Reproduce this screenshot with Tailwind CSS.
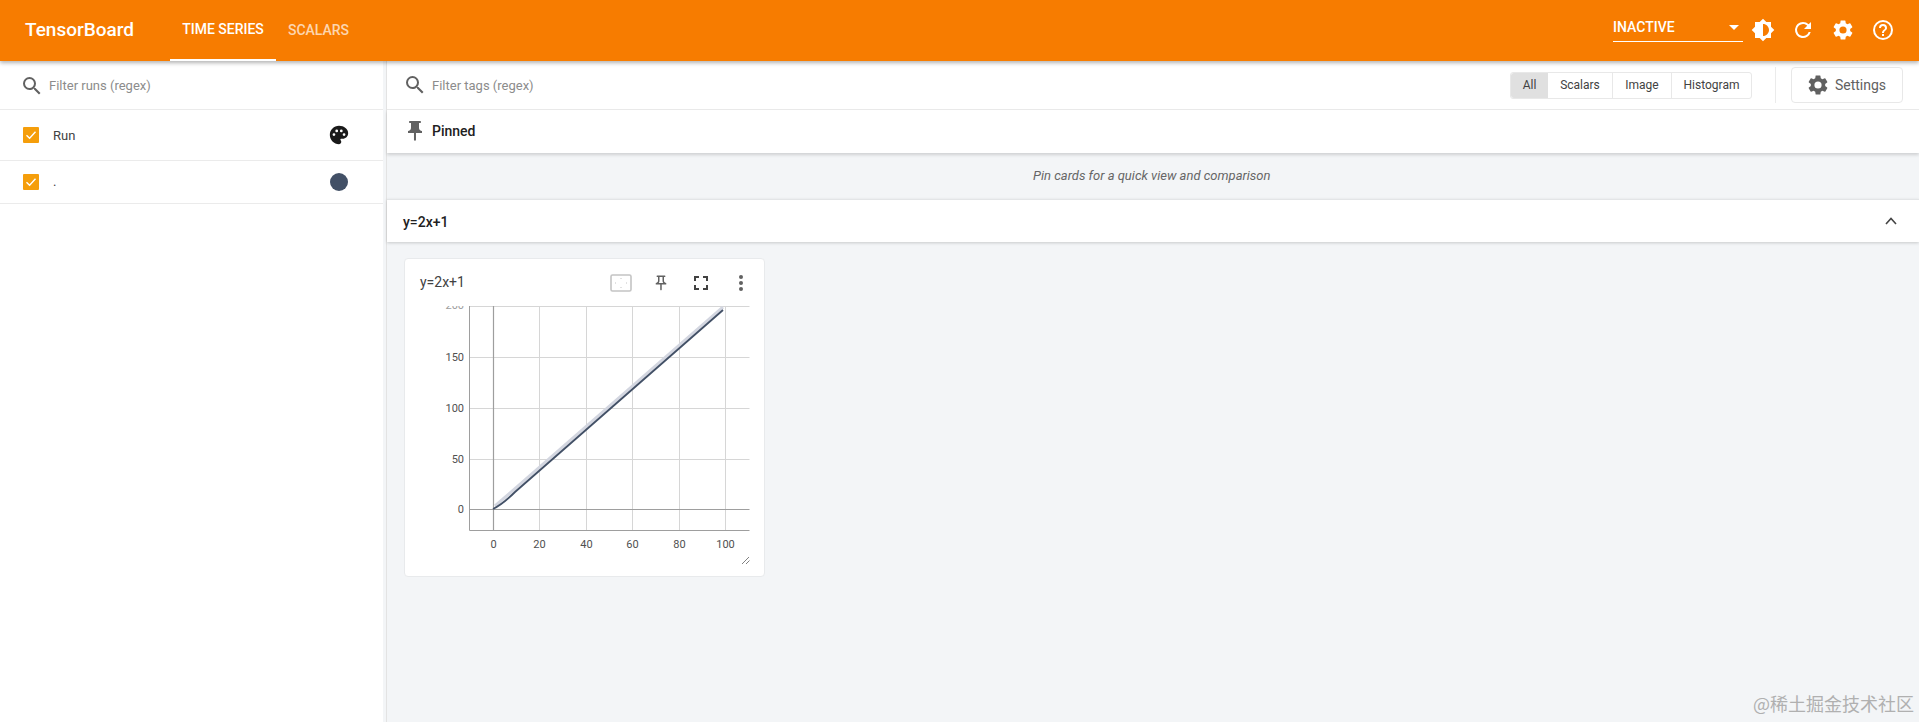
<!DOCTYPE html>
<html lang="en">
<head>
    <meta charset="UTF-8">
    <title>TensorBoard</title>
    <script src="https://cdn.jsdelivr.net/npm/@tailwindcss/browser@4"></script>
</head>
<body class="h-[722px] overflow-hidden bg-[#f3f5f7] font-['Roboto',sans-serif] text-[#212121] relative">

    <!-- top bar -->
    <header class="relative z-10 h-[61px] bg-[#f77c00] text-white flex items-stretch shadow-[0_2px_4px_rgba(0,0,0,0.3)]">
        <div class="w-[170px] pl-[25px] flex items-center text-[19px] font-medium">TensorBoard</div>
        <div class="w-[106px] border-b-2 border-white flex items-center justify-center text-[14px] font-medium">TIME SERIES</div>
        <div class="w-[85px] flex items-center justify-center text-[14px] font-medium text-white/70">SCALARS</div>
        <div class="ml-auto flex items-start pr-[24px]">
            <div class="w-[130px] h-[42px] pt-[18px] border-b border-white flex items-start justify-between text-[14px] font-medium">
                <span class="leading-[18px]">INACTIVE</span>
                <span class="w-0 h-0 mr-[4px] mt-[7px] border-x-[5px] border-x-transparent border-t-[5px] border-t-white"></span>
            </div>
            <svg class="w-[24px] h-[24px] ml-[8px] mt-[18px]" viewBox="0 0 24 24" fill="#fff"><path d="M20 8.69V4h-4.69L12 .69 8.69 4H4v4.69L.69 12 4 15.31V20h4.69L12 23.31 15.31 20H20v-4.69L23.31 12 20 8.69zM12 18V6c3.31 0 6 2.69 6 6s-2.69 6-6 6z"/></svg>
            <svg class="w-[24px] h-[24px] ml-[16px] mt-[18px]" viewBox="0 0 24 24" fill="#fff"><path d="M17.65 6.35A7.96 7.96 0 0 0 12 4a8 8 0 1 0 7.73 10h-2.08A6 6 0 1 1 12 6c1.66 0 3.14.69 4.22 1.78L13 11h7V4l-2.35 2.35z"/></svg>
            <svg class="w-[24px] h-[24px] ml-[16px] mt-[18px]" viewBox="0 0 24 24" fill="#fff"><path d="M19.14 12.94c.04-.3.06-.61.06-.94 0-.32-.02-.64-.07-.94l2.03-1.58a.49.49 0 0 0 .12-.61l-1.92-3.32a.49.49 0 0 0-.59-.22l-2.39.96c-.5-.38-1.03-.7-1.62-.94l-.36-2.54a.48.48 0 0 0-.48-.41h-3.84c-.24 0-.43.17-.47.41l-.36 2.54c-.59.24-1.13.57-1.62.94l-2.39-.96a.48.48 0 0 0-.59.22L2.74 8.87c-.12.21-.08.47.12.61l2.03 1.58c-.05.3-.09.63-.09.94s.02.64.07.94l-2.03 1.58a.49.49 0 0 0-.12.61l1.92 3.32c.12.22.37.29.59.22l2.39-.96c.5.38 1.03.7 1.62.94l.36 2.54c.05.24.24.41.48.41h3.84c.24 0 .44-.17.47-.41l.36-2.54c.59-.24 1.13-.56 1.62-.94l2.39.96c.22.08.47 0 .59-.22l1.92-3.32a.46.46 0 0 0-.12-.61l-2.01-1.58zM12 15.6A3.61 3.61 0 0 1 8.4 12 3.61 3.61 0 0 1 12 8.4a3.61 3.61 0 0 1 3.6 3.6 3.61 3.61 0 0 1-3.6 3.6z"/></svg>
            <svg class="w-[24px] h-[24px] ml-[16px] mt-[18px]" viewBox="0 0 24 24" fill="#fff"><path d="M11 18h2v-2h-2v2zm1-16a10 10 0 1 0 0 20 10 10 0 0 0 0-20zm0 18a8 8 0 1 1 0-16 8 8 0 0 1 0 16zm0-14a4 4 0 0 0-4 4h2c0-1.1.9-2 2-2s2 .9 2 2c0 2-3 1.75-3 5h2c0-2.25 3-2.5 3-5a4 4 0 0 0-4-4z"/></svg>
        </div>
    </header>

    <div class="flex h-[661px]">
        <!-- runs sidebar -->
        <aside class="w-[383px] shrink-0 bg-white text-[13px]">
            <div class="h-[49px] pl-[20px] pt-[1px] flex items-center border-b border-[#ebebeb]">
                <svg class="w-[24px] h-[24px]" viewBox="0 0 24 24" fill="#616161"><path d="M15.5 14h-.79l-.28-.27A6.47 6.47 0 0 0 16 9.5 6.5 6.5 0 1 0 9.5 16c1.61 0 3.09-.59 4.23-1.57l.27.28v.79l5 4.99L20.49 19l-4.99-5zm-6 0C7.01 14 5 11.99 5 9.5S7.01 5 9.5 5 14 7.01 14 9.5 11.99 14 9.5 14z"/></svg>
                <span class="ml-[5px] text-[#8c8c8c]">Filter runs (regex)</span>
            </div>
            <div class="h-[51px] pl-[23px] pr-[33px] flex items-center border-b border-[#ebebeb]">
                <span class="w-[16px] h-[16px] bg-[#f59e0b] rounded-[1px] flex items-center justify-center">
                    <svg class="w-[12px] h-[12px]" viewBox="0 0 12 12" fill="none" stroke="#fff" stroke-width="1.4"><path d="M1.5 6.2 4.6 9.2 10.5 2.8"/></svg>
                </span>
                <span class="ml-[14px] pt-[1px] text-[#424242]">Run</span>
                <svg class="w-[22px] h-[22px] ml-auto" viewBox="0 0 24 24" fill="#1a1a1a"><path d="M12 2C6.49 2 2 6.49 2 12s4.49 10 10 10a2.5 2.5 0 0 0 1.84-4.19c-.29-.3-.34-.66-.34-.81 0-.55.45-1 1-1H16c3.31 0 6-2.69 6-6 0-4.41-4.49-8-10-8zM6.5 13a1.5 1.5 0 1 1 0-3 1.5 1.5 0 0 1 0 3zm3-4a1.5 1.5 0 1 1 0-3 1.5 1.5 0 0 1 0 3zm5 0a1.5 1.5 0 1 1 0-3 1.5 1.5 0 0 1 0 3zm3 4a1.5 1.5 0 1 1 0-3 1.5 1.5 0 0 1 0 3z"/></svg>
            </div>
            <div class="h-[43px] pl-[23px] pr-[35px] flex items-center border-b border-[#ebebeb]">
                <span class="w-[16px] h-[16px] bg-[#f59e0b] rounded-[1px] flex items-center justify-center">
                    <svg class="w-[12px] h-[12px]" viewBox="0 0 12 12" fill="none" stroke="#fff" stroke-width="1.4"><path d="M1.5 6.2 4.6 9.2 10.5 2.8"/></svg>
                </span>
                <span class="ml-[14px] text-[#424242]">.</span>
                <span class="ml-auto w-[18px] h-[18px] rounded-full bg-[#425066]"></span>
            </div>
        </aside>

        <!-- main column -->
        <main class="flex-1 ml-[3px] border-l border-[#e3e3e3] min-w-0">
            <div class="h-[49px] pl-[16px] bg-white border-b border-[#ebebeb] flex items-center text-[13px]">
                <svg class="w-[24px] h-[24px]" viewBox="0 0 24 24" fill="#616161"><path d="M15.5 14h-.79l-.28-.27A6.47 6.47 0 0 0 16 9.5 6.5 6.5 0 1 0 9.5 16c1.61 0 3.09-.59 4.23-1.57l.27.28v.79l5 4.99L20.49 19l-4.99-5zm-6 0C7.01 14 5 11.99 5 9.5S7.01 5 9.5 5 14 7.01 14 9.5 11.99 14 9.5 14z"/></svg>
                <span class="ml-[5px] pt-[1px] text-[#8c8c8c]">Filter tags (regex)</span>
                <div class="ml-auto flex h-[27px] border border-[#e8e8e8] rounded-[3px] text-[12px] text-[#424242]">
                    <span class="w-[37px] bg-[#e0e0e0] flex items-center justify-center rounded-l-[3px]">All</span>
                    <span class="w-[65px] border-r border-[#e8e8e8] flex items-center justify-center">Scalars</span>
                    <span class="w-[59px] border-r border-[#e8e8e8] flex items-center justify-center">Image</span>
                    <span class="w-[79px] flex items-center justify-center">Histogram</span>
                </div>
                <div class="w-px h-[36px] bg-[#ebebeb] ml-[23px]"></div>
                <div class="w-[112px] h-[36px] ml-[15px] mr-[16px] border border-[#e8e8e8] rounded-[4px] flex items-center justify-center text-[14px] text-[#616161]">
                    <svg class="w-[24px] h-[24px] mr-[5px] ml-[-2px]" viewBox="0 0 24 24" fill="#616161"><path d="M19.14 12.94c.04-.3.06-.61.06-.94 0-.32-.02-.64-.07-.94l2.03-1.58a.49.49 0 0 0 .12-.61l-1.92-3.32a.49.49 0 0 0-.59-.22l-2.39.96c-.5-.38-1.03-.7-1.62-.94l-.36-2.54a.48.48 0 0 0-.48-.41h-3.84c-.24 0-.43.17-.47.41l-.36 2.54c-.59.24-1.13.57-1.62.94l-2.39-.96a.48.48 0 0 0-.59.22L2.74 8.87c-.12.21-.08.47.12.61l2.03 1.58c-.05.3-.09.63-.09.94s.02.64.07.94l-2.03 1.58a.49.49 0 0 0-.12.61l1.92 3.32c.12.22.37.29.59.22l2.39-.96c.5.38 1.03.7 1.62.94l.36 2.54c.05.24.24.41.48.41h3.84c.24 0 .44-.17.47-.41l.36-2.54c.59-.24 1.13-.56 1.62-.94l2.39.96c.22.08.47 0 .59-.22l1.92-3.32a.46.46 0 0 0-.12-.61l-2.01-1.58zM12 15.6A3.61 3.61 0 0 1 8.4 12 3.61 3.61 0 0 1 12 8.4a3.61 3.61 0 0 1 3.6 3.6 3.61 3.61 0 0 1-3.6 3.6z"/></svg>
                    Settings
                </div>
            </div>
            <div class="relative h-[43px] pl-[16px] bg-white flex items-center text-[14px] font-medium shadow-[0_2px_3px_rgba(0,0,0,0.15)]">
                <svg class="w-[24px] h-[24px] mt-[-1px]" viewBox="0 0 24 24" fill="#616161"><path d="M16 9V4h1c.55 0 1-.45 1-1s-.45-1-1-1H7c-.55 0-1 .45-1 1s.45 1 1 1h1v5c0 1.66-1.34 3-3 3v2h5.97v7l1 1 1-1v-7H19v-2c-1.66 0-3-1.34-3-3z"/></svg>
                <span class="ml-[5px]">Pinned</span>
            </div>
            <div class="h-[46px] pl-[646px] flex items-center text-[13px] italic text-[#666]">Pin cards for a quick view and comparison</div>
            <div class="relative h-[43px] pl-[16px] pr-[20px] bg-white border-t border-[#e3e5e7] flex items-center justify-between text-[14px] font-medium shadow-[0_1px_3px_rgba(0,0,0,0.18)]">
                <span class="pt-[2px]">y=2x+1</span>
                <svg class="w-[16px] h-[16px]" viewBox="0 0 16 16" fill="none" stroke="#444" stroke-width="1.6"><path d="M3 11 8 5.500 13 11"/></svg>
            </div>

            <!-- chart card -->
            <div class="w-[361px] h-[319px] ml-[17px] mt-[16px] bg-white border border-[#e8eaec] rounded-[4px]">
                <div class="h-[47px] pl-[15px] pr-[11px] flex items-center text-[14px] text-[#424242]">
                    <span>y=2x+1</span>
                    <svg class="ml-auto w-[24px] h-[24px]" viewBox="0 0 24 24" fill="none"><rect x="2" y="4" width="20" height="16" rx="1.500" stroke="#c4c4c4" stroke-width="1.600"/><path d="M12 7v1M12 16v1M6 12h1M17 12h1" stroke="#c4c4c4"/></svg>
                    <svg class="ml-[19px] mr-[3px] w-[18px] h-[18px]" viewBox="0 0 24 24" fill="#616161"><path d="M14 4v5c0 1.120.37 2.160 1 3H9c.65-.86 1-1.900 1-3V4h4m3-2H7c-.55 0-1 .45-1 1s.45 1 1 1h1v5c0 1.660-1.340 3-3 3v2h5.970v7l1 1 1-1v-7H19v-2c-1.660 0-3-1.340-3-3V4h1c.55 0 1-.45 1-1s-.45-1-1-1z"/></svg>
                    <svg class="ml-[16px] w-[24px] h-[24px]" viewBox="0 0 24 24" fill="#424242"><path d="M7 14H5v5h5v-2H7v-3zm-2-4h2V7h3V5H5v5zm12 7h-3v2h5v-5h-2v3zM14 5v2h3v3h2V5h-5z"/></svg>
                    <svg class="ml-[16px] w-[24px] h-[24px]" viewBox="0 0 24 24" fill="#616161"><circle cx="12" cy="6" r="2"/><circle cx="12" cy="12" r="2"/><circle cx="12" cy="18" r="2"/></svg>
                </div>
                <!-- plot area, offset from page: x-405, y-306 -->
                <svg width="359" height="270" viewBox="0 0 359 270" class="block font-['Roboto',sans-serif] text-[11px]">
                    <g stroke="#d6d6d6" stroke-width="1">
                        <path d="M64.500 .5H344.500M64.500 51.500H344.500M64.500 102.500H344.500M64.500 153.500H344.500"/>
                        <path d="M134.500 0V224M181.500 0V224M227.500 0V224M274.500 0V224M320.500 0V224"/>
                    </g>
                    <path d="M88.500 0V224M64 203.500H344.500" stroke="#9e9e9e" stroke-width="1.200"/>
                    <path d="M64.500 0V224.500H344.500" fill="none" stroke="#9e9e9e"/>
                    <path d="M90 200 L318 1" stroke="#d3d6e0" stroke-width="3" fill="none"/>
                    <path d="M88 203 Q 98 198 110 186 L318 4" stroke="#425066" stroke-width="1.800" fill="none"/>
                    <text x="59" y="3" fill="#9e9e9e" text-anchor="end">200</text>
                    <g fill="#505050" text-anchor="end">
                        <text x="59" y="55">150</text>
                        <text x="59" y="106">100</text>
                        <text x="59" y="157">50</text>
                        <text x="59" y="207">0</text>
                    </g>
                    <g fill="#505050" text-anchor="middle">
                        <text x="88.500" y="242">0</text>
                        <text x="134.500" y="242">20</text>
                        <text x="181.500" y="242">40</text>
                        <text x="227.500" y="242">60</text>
                        <text x="274.500" y="242">80</text>
                        <text x="320.500" y="242">100</text>
                    </g>
                    <path d="M337 258 344 251M341 258 344.500 254.500" stroke="#616161" stroke-width=".8"/>
                </svg>
            </div>
        </main>
    </div>

    <!-- watermark over the screenshot -->
    <div class="absolute right-[5px] bottom-[6px] text-[18px] leading-[26px] text-[#b0b0b0] font-['Noto_Sans_CJK_SC',sans-serif]">@稀土掘金技术社区</div>
</body>
</html>
